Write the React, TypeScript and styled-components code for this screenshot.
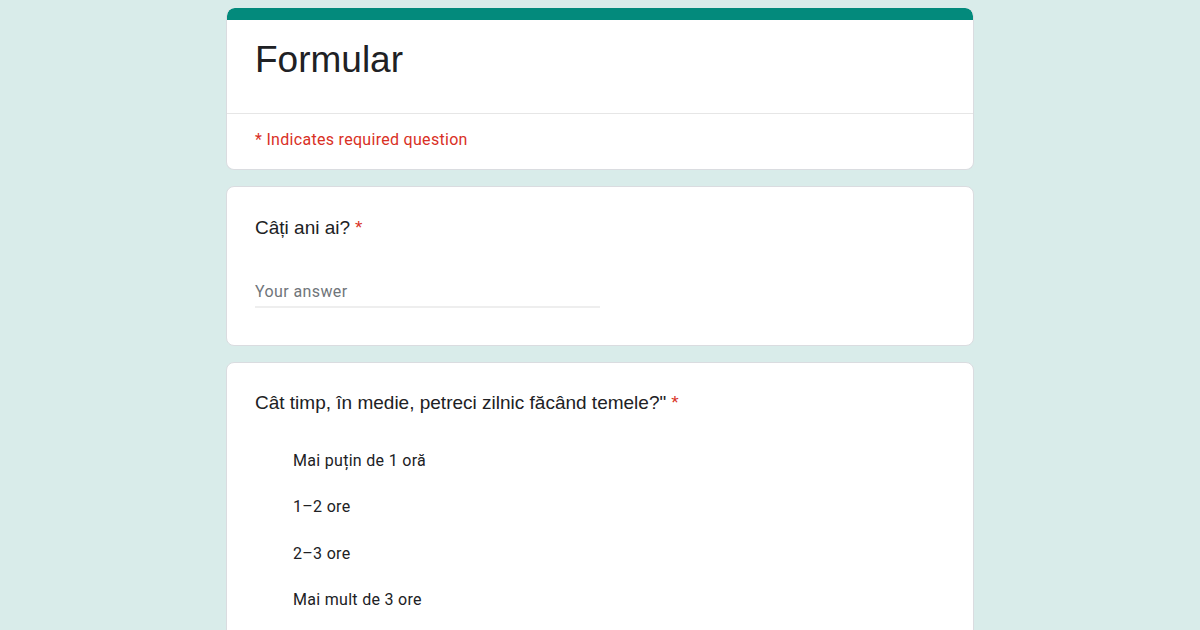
import React from "react";
import styled, { createGlobalStyle } from "styled-components";

const Global = createGlobalStyle`
  html, body { margin: 0; padding: 0; background: #d9ecea; }
  body { font-family: Roboto, "Liberation Sans", Arial, sans-serif; color: #202124; }
`;

const Page = styled.div`
  width: 748px;
  margin: 0 auto;
  padding-top: 8px;
  display: flex;
  flex-direction: column;
  gap: 16px;
`;

const Card = styled.section`
  background: #fff;
  border: 1px solid #dadce0;
  border-radius: 8px;
  overflow: hidden;
`;

const HeaderCard = styled(Card)`
  border-top: none;
`;

const TopBar = styled.div`
  height: 12px;
  background: #038a7c;
  border-radius: 8px 8px 0 0;
`;

const TitleBlock = styled.div`
  padding: 17px 28px 31px;
  border-bottom: 1px solid #e6e6e6;
`;

const Title = styled.h1`
  margin: 0;
  font-family: "Liberation Sans", Arial, sans-serif;
  font-weight: 400;
  font-size: 37px;
  line-height: 45px;
  color: #202124;
`;

const RequiredNote = styled.div`
  padding: 16px 28px 19px;
  font-family: Roboto, sans-serif;
  font-size: 16px;
  line-height: 20px;
  letter-spacing: 0.3px;
  color: #d93025;
`;

const QuestionCard = styled(Card)<{ $top: number; $bottom: number }>`
  padding: ${(p) => p.$top}px 28px ${(p) => p.$bottom}px;
`;

const Question = styled.div`
  font-family: "Liberation Sans", Arial, sans-serif;
  font-size: 19px;
  line-height: 24px;
  color: #202124;
`;

const Star = styled.span`
  color: #d93025;
  margin-left: 5px;
`;

const AnswerField = styled.div`
  margin-top: 42px;
  width: 345px;
  padding-bottom: 4px;
  border-bottom: 2px solid #eeeeee;
  font-family: Roboto, sans-serif;
  font-size: 16px;
  line-height: 20px;
  letter-spacing: 0.4px;
  color: #70757a;
`;

const Options = styled.div`
  margin-top: 22px;
  padding-left: 38px;
  display: flex;
  flex-direction: column;
`;

const Option = styled.div`
  height: 46.5px;
  display: flex;
  align-items: center;
  font-family: Roboto, sans-serif;
  font-size: 16px;
  letter-spacing: 0.3px;
  color: #202124;
`;

const options = ["Mai puțin de 1 oră", "1–2 ore", "2–3 ore", "Mai mult de 3 ore"];

export default function App() {
  return (
    <>
      <Global />
      <Page>
        <HeaderCard>
          <TopBar />
          <TitleBlock>
            <Title>Formular</Title>
          </TitleBlock>
          <RequiredNote>* Indicates required question</RequiredNote>
        </HeaderCard>
        <QuestionCard $top={29} $bottom={37}>
          <Question>
            Câți ani ai?<Star>*</Star>
          </Question>
          <AnswerField>Your answer</AnswerField>
        </QuestionCard>
        <QuestionCard $top={28} $bottom={40}>
          <Question>
            Cât timp, în medie, petreci zilnic făcând temele?"<Star>*</Star>
          </Question>
          <Options>
            {options.map((o) => (
              <Option key={o}>{o}</Option>
            ))}
          </Options>
        </QuestionCard>
      </Page>
    </>
  );
}
